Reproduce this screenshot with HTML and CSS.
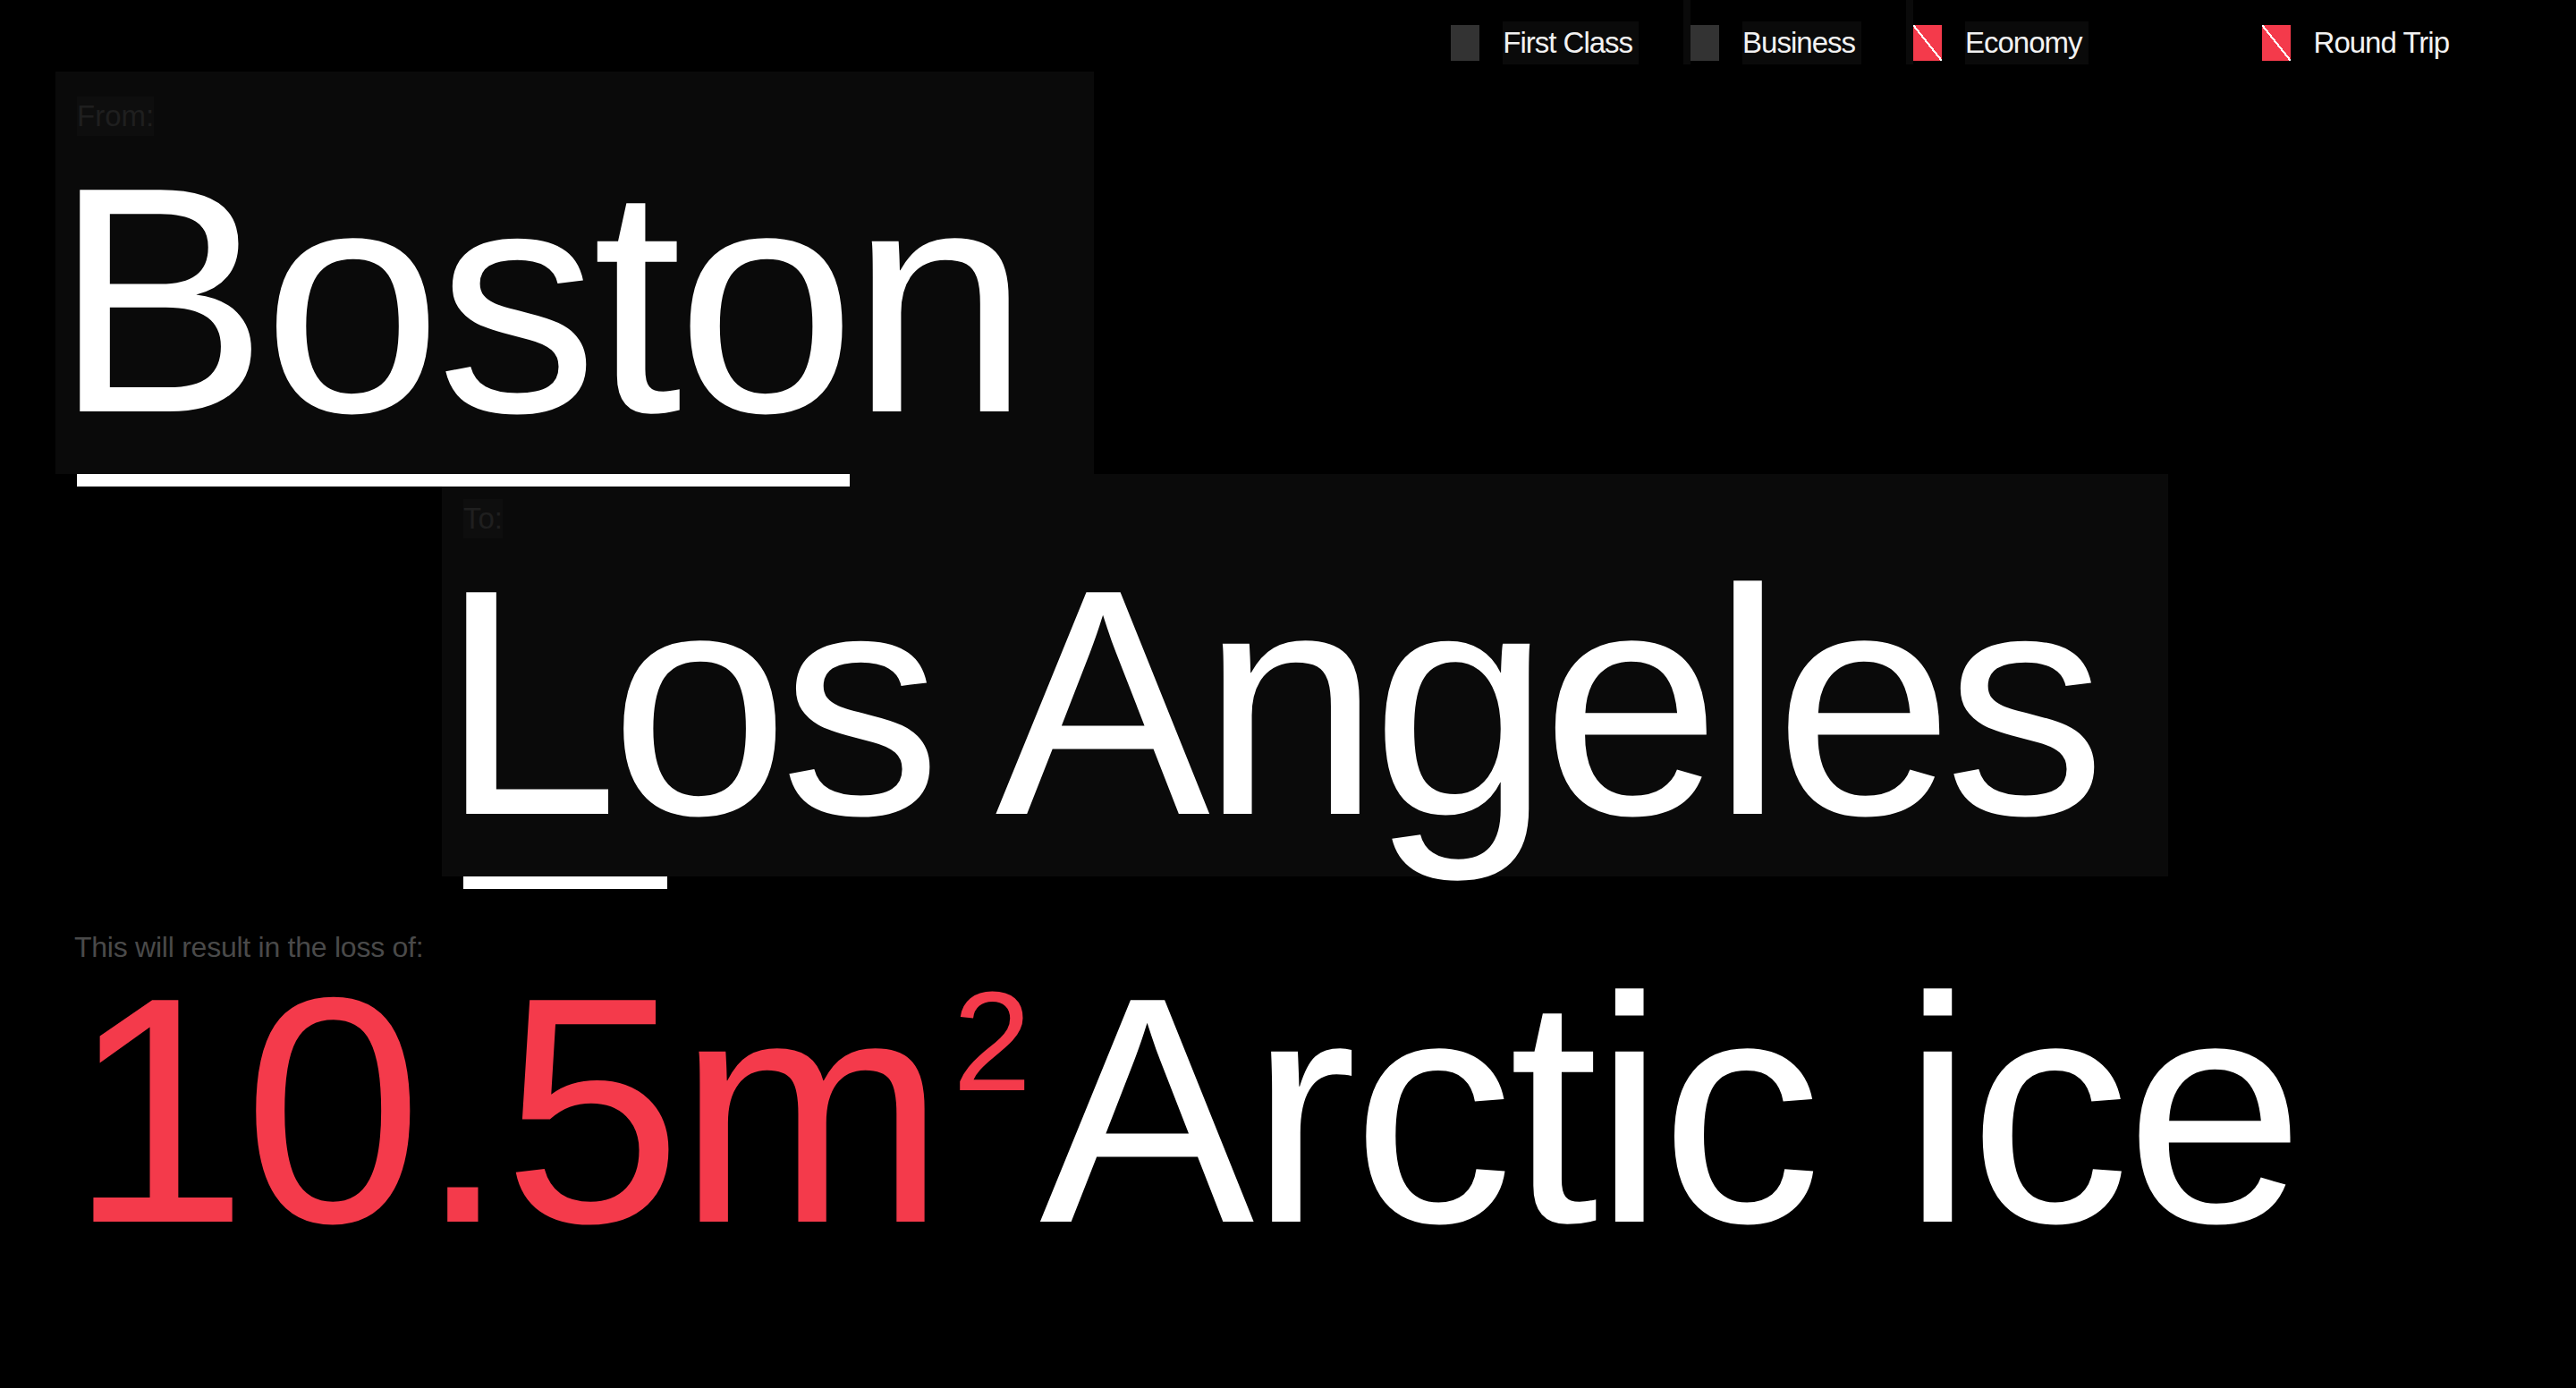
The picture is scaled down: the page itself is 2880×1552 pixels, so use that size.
FILE: index.html
```html
<!DOCTYPE html>
<html lang="en">
<head>
<meta charset="utf-8">
<title>Flight footprint</title>
<link rel="stylesheet" href="styles.css">
</head>
<body>
<header class="topbar">
  <div class="classes">
    <label class="opt"><input type="radio" name="cls" class="box"><span class="opt-text">First Class</span></label>
    <label class="opt"><input type="radio" name="cls" class="box"><span class="opt-text">Business</span></label>
    <label class="opt"><input type="radio" name="cls" class="box" checked><span class="opt-text">Economy</span></label>
  </div>
  <label class="opt opt-plain"><input type="checkbox" class="box" checked><span class="opt-text">Round Trip</span></label>
</header>
<main class="route">
  <section class="leg leg-from">
    <div class="field field-from">
      <span class="field-label">From:</span>
      <div class="city city-from">Boston</div>
    </div>
    <div class="bar" style="width:864px"></div>
  </section>
  <section class="leg leg-to">
    <div class="field field-to">
      <span class="field-label">To:</span>
      <div class="city city-to">Los Angeles</div>
    </div>
    <div class="bar" style="width:228px"></div>
  </section>
  <section class="result">
    <p class="result-label">This will result in the loss of:</p>
    <p class="result-value"><span class="amount">10.5m<sup class="unit">2</sup></span>Arctic ice</p>
  </section>
</main>
</body>
</html>
```
FILE: styles.css
```css
* { box-sizing: border-box; }

html, body {
  margin: 0;
  padding: 0;
  background: #000;
}

body {
  width: 2880px;
  height: 1552px;
  overflow: hidden;
  color: #fff;
  font-family: "Liberation Sans", Arial, Helvetica, sans-serif;
}

/* top options bar */
.topbar {
  display: flex;
  justify-content: flex-end;
  padding-right: 142px;
}

.classes {
  display: flex;
}

.opt {
  display: flex;
  align-items: center;
  gap: 26px;
  height: 72px;
  padding-top: 24px;
  padding-right: 50px;
  cursor: pointer;
}

.classes .opt + .opt {
  border-left: 8px solid #0a0a0a;
}

.opt-plain {
  margin-left: 144px;
  padding-right: 0;
}

.opt-text {
  font-size: 33px;
  line-height: 48px;
  letter-spacing: -1px;
  color: #f2f2f2;
  white-space: nowrap;
}

.classes .opt-text {
  background: #0a0a0a;
  padding-right: 7px;
}

.box {
  appearance: none;
  -webkit-appearance: none;
  display: block;
  flex: none;
  width: 32px;
  height: 40px;
  margin: 0;
  border: 0;
  border-radius: 0;
  background: #333;
}

.box:checked {
  background:
    linear-gradient(to top right,
      transparent calc(50% - 1.1px),
      #fff calc(50% - 1.1px),
      #fff calc(50% + 1.1px),
      transparent calc(50% + 1.1px)),
    #f43a4b;
}

/* route fields */
.route {
  padding-left: 62px;
  margin-top: 8px;
}

.field {
  display: flex;
  flex-direction: column;
  align-items: flex-start;
  background: #0a0a0a;
  padding: 28px 24px 15px;
}

.field-from { width: 1161px; }
.field-to { width: 1930px; }

.field-label {
  display: block;
  font-size: 33px;
  line-height: 44px;
  color: #1f1f1f;
  background: #0e0e0e;
}

.city {
  font-size: 360px;
  line-height: 1;
  padding-top: 3px;
  margin-left: -0.073em;
  white-space: nowrap;
}

.city-from { letter-spacing: -5.9px; }
.city-to { letter-spacing: -9.9px; }

.bar {
  position: relative;
  z-index: 1;
  height: 14px;
  margin-left: 24px;
  margin-bottom: -14px;
  background: #fff;
}

.leg-to {
  margin-left: 432px;
}

/* result */
.result {
  margin-top: 61px;
}

.result-label {
  margin: 0;
  padding-left: 21px;
  font-size: 32px;
  line-height: 36px;
  letter-spacing: -0.25px;
  color: #4a4a4a;
}

.result-value {
  margin: 11px 0 0 15px;
  font-size: 360px;
  line-height: 0.85;
  letter-spacing: -5.1px;
  white-space: nowrap;
}

.amount {
  color: #f43a4b;
  letter-spacing: -5.05px;
}

.unit {
  font-size: 158px;
  line-height: 0;
  letter-spacing: 0;
  vertical-align: 147px;
  margin-left: 13px;
  margin-right: 9px;
}
```
